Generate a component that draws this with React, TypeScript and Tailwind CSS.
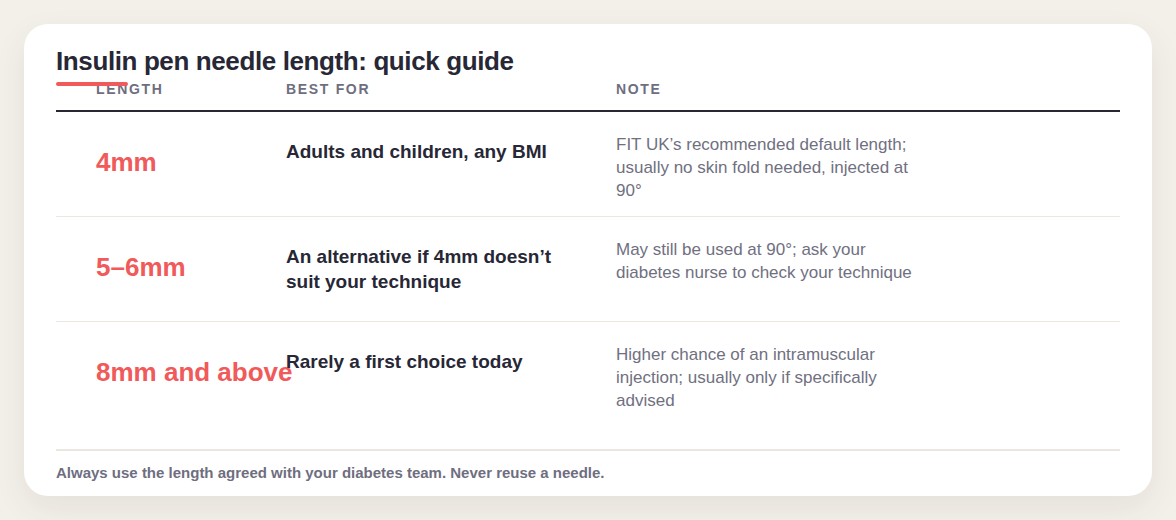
const rows = [
  {
    length: "4mm",
    best: "Adults and children, any BMI",
    note: "FIT UK’s recommended default length; usually no skin fold needed, injected at 90°",
    h: "h-[105px]",
  },
  {
    length: "5–6mm",
    best: "An alternative if 4mm doesn’t suit your technique",
    note: "May still be used at 90°; ask your diabetes nurse to check your technique",
    h: "h-[105px]",
  },
  {
    length: "8mm and above",
    best: "Rarely a first choice today",
    note: "Higher chance of an intramuscular injection; usually only if specifically advised",
    h: "h-[127px]",
  },
];

export default function App() {
  return (
    <div className="min-h-screen bg-[#f3f0ea] p-6 font-['Liberation_Sans',Arial,sans-serif]">
      <div className="h-[472px] rounded-3xl bg-white px-8 pt-[22px] shadow-[0_12px_32px_rgba(60,50,30,0.08)]">
        <div className="relative">
          <h1 className="text-[26px] leading-[30px] font-bold tracking-[-0.015em] text-[#272736]">
            Insulin pen needle length: quick guide
          </h1>
          <span className="absolute left-0 top-[36px] h-1 w-[72px] rounded-full bg-[#f05a5a]" />
        </div>

        {/* header */}
        <div className="grid grid-cols-[230px_330px_1fr] border-b-2 border-[#272736] pt-[5px] pb-[13px] text-[14px] leading-4 font-bold tracking-[0.12em] text-[#6e6e80]">
          <div className="pl-10">LENGTH</div>
          <div>BEST FOR</div>
          <div>NOTE</div>
        </div>

        {rows.map((r, i) => (
          <div
            key={r.length}
            className={`grid grid-cols-[230px_330px_1fr] ${r.h} ${i < rows.length - 1 ? "border-b border-[#ebe7e0]" : ""}`}
          >
            <div className="pl-10 pt-[35px] text-[26px] leading-[30px] font-bold whitespace-nowrap text-[#f05a5a]">
              {r.length}
            </div>
            <div className="pt-[27px] pr-[30px] text-[19px] leading-[25px] font-bold text-[#272736]">
              {r.best}
            </div>
            <div className="max-w-[305px] pt-[21px] text-[17px] leading-[23px] text-[#70707f]">
              {r.note}
            </div>
          </div>
        ))}

        <div className="border-t-2 border-[#ebe7e0] pt-[12px] text-[15px] leading-5 font-bold text-[#6e6e80]">
          Always use the length agreed with your diabetes team. Never reuse a needle.
        </div>
      </div>
    </div>
  );
}
